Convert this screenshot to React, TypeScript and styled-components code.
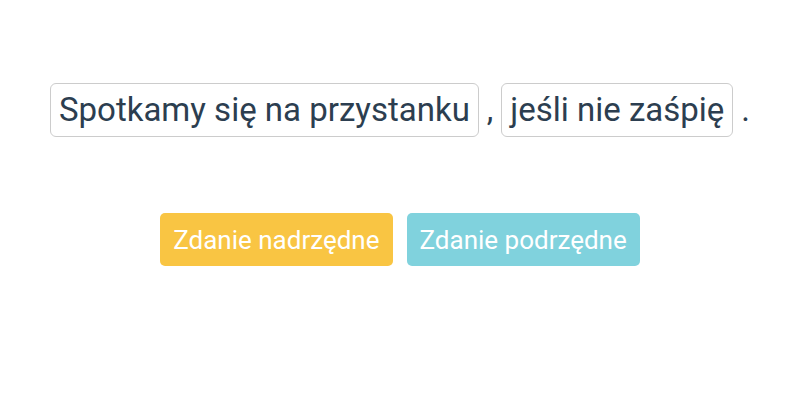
import React from "react";
import styled, { createGlobalStyle } from "styled-components";

const GlobalStyle = createGlobalStyle`
  body {
    margin: 0;
    background: #ffffff;
    font-family: Roboto, "Noto Sans", sans-serif;
  }
`;

const Page = styled.div`
  display: flex;
  flex-direction: column;
  align-items: center;
  padding-top: 83px;
`;

const Sentence = styled.div`
  display: flex;
  align-items: center;
  gap: 8px;
  color: #2c3e50;
  font-size: 33px;
`;

const Clause = styled.span`
  display: inline-block;
  padding: 0 8px;
  height: 52px;
  line-height: 52px;
  border: 1px solid #cccccc;
  border-radius: 6px;
`;

const Punct = styled.span`
  line-height: 52px;
`;

const Buttons = styled.div`
  display: flex;
  gap: 14px;
  margin-top: 76px;
`;

const Choice = styled.button<{ $color: string }>`
  height: 53px;
  padding: 0 13px;
  border: none;
  border-radius: 5px;
  background: ${(p) => p.$color};
  color: #ffffff;
  font-family: Roboto, "Noto Sans", sans-serif;
  font-size: 26px;
  cursor: pointer;
`;

const App: React.FC = () => {
  return (
    <>
      <GlobalStyle />
      <Page>
        <Sentence>
          <Clause>Spotkamy się na przystanku</Clause>
          <Punct>,</Punct>
          <Clause>jeśli nie zaśpię</Clause>
          <Punct>.</Punct>
        </Sentence>
        <Buttons>
          <Choice $color="#f9c543">Zdanie nadrzędne</Choice>
          <Choice $color="#80d2dd">Zdanie podrzędne</Choice>
        </Buttons>
      </Page>
    </>
  );
};

export default App;
